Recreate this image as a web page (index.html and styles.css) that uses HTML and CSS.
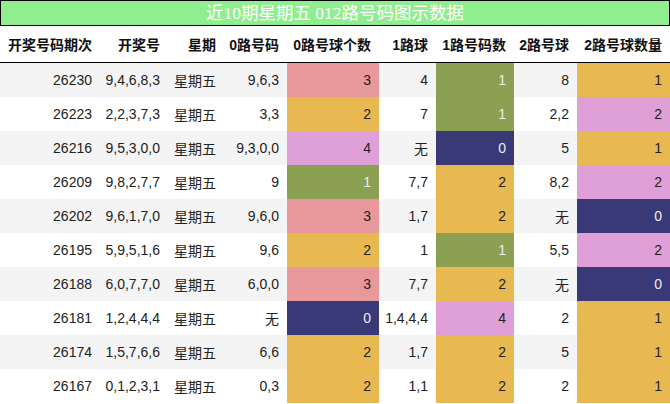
FILE: index.html
```html
<!DOCTYPE html>
<html>
<head>
<meta charset="utf-8">
<link rel="stylesheet" href="styles.css">
</head>
<body>
<div class="title">近10期星期五 012路号码图示数据</div>
<table class="data">
<colgroup>
<col class="w1"><col class="w2"><col class="w3"><col class="w4"><col class="w5"><col class="w6"><col class="w7"><col class="w8"><col class="w9">
</colgroup>
<thead>
<tr><th>开奖号码期次</th><th>开奖号</th><th>星期</th><th>0路号码</th><th>0路号球个数</th><th>1路球</th><th>1路号码数</th><th>2路号球</th><th>2路号球数量</th></tr>
</thead>
<tbody>
<tr><td>26230</td><td>9,4,6,8,3</td><td>星期五</td><td>9,6,3</td><td class="pink">3</td><td>4</td><td class="olive">1</td><td>8</td><td class="gold">1</td></tr>
<tr><td>26223</td><td>2,2,3,7,3</td><td>星期五</td><td>3,3</td><td class="gold">2</td><td>7</td><td class="olive">1</td><td>2,2</td><td class="lav">2</td></tr>
<tr><td>26216</td><td>9,5,3,0,0</td><td>星期五</td><td>9,3,0,0</td><td class="lav">4</td><td>无</td><td class="navy">0</td><td>5</td><td class="gold">1</td></tr>
<tr><td>26209</td><td>9,8,2,7,7</td><td>星期五</td><td>9</td><td class="olive">1</td><td>7,7</td><td class="gold">2</td><td>8,2</td><td class="lav">2</td></tr>
<tr><td>26202</td><td>9,6,1,7,0</td><td>星期五</td><td>9,6,0</td><td class="pink">3</td><td>1,7</td><td class="gold">2</td><td>无</td><td class="navy">0</td></tr>
<tr><td>26195</td><td>5,9,5,1,6</td><td>星期五</td><td>9,6</td><td class="gold">2</td><td>1</td><td class="olive">1</td><td>5,5</td><td class="lav">2</td></tr>
<tr><td>26188</td><td>6,0,7,7,0</td><td>星期五</td><td>6,0,0</td><td class="pink">3</td><td>7,7</td><td class="gold">2</td><td>无</td><td class="navy">0</td></tr>
<tr><td>26181</td><td>1,2,4,4,4</td><td>星期五</td><td>无</td><td class="navy">0</td><td>1,4,4,4</td><td class="lav">4</td><td>2</td><td class="gold">1</td></tr>
<tr><td>26174</td><td>1,5,7,6,6</td><td>星期五</td><td>6,6</td><td class="gold">2</td><td>1,7</td><td class="gold">2</td><td>5</td><td class="gold">1</td></tr>
<tr><td>26167</td><td>0,1,2,3,1</td><td>星期五</td><td>0,3</td><td class="gold">2</td><td>1,1</td><td class="gold">2</td><td>2</td><td class="gold">1</td></tr>
</tbody>
</table>
</body>
</html>
```
FILE: styles.css
```css
html, body {
  margin: 0;
  padding: 0;
  background: #fff;
}
body {
  width: 670px;
  font-family: "Liberation Sans", "Noto Sans CJK SC", sans-serif;
  color: #222;
}
.title {
  box-sizing: border-box;
  height: 26px;
  border: 1px solid #000;
  background: #90ee90;
  color: #fff;
  font-family: "Liberation Serif", "Noto Sans CJK SC", serif;
  font-size: 17.5px;
  line-height: 24px;
  text-align: center;
}
.data {
  width: 670px;
  table-layout: fixed;
  border-collapse: collapse;
  font-size: 14px;
}
.w1 { width: 100px; }
.w2 { width: 68px; }
.w3 { width: 56px; }
.w4 { width: 63px; }
.w5 { width: 92px; }
.w6 { width: 57px; }
.w7 { width: 78px; }
.w8 { width: 63px; }
.w9 { width: 93px; }
.data th {
  height: 36px;
  padding: 0 8px 0 0;
  text-align: right;
  font-weight: bold;
  border-bottom: 1px solid #000;
  white-space: nowrap;
  color: #111;
}
.data th:first-child {
  padding-left: 8px;
}
.data td {
  height: 34px;
  padding: 0 8px 0 0;
  text-align: right;
  white-space: nowrap;
}
.data tbody tr:nth-child(odd) {
  background: #f4f4f4;
}
.data td.pink { background: #e8979b; }
.data td.gold { background: #e8b951; }
.data td.olive { background: #8ba052; color: #eee; }
.data td.navy { background: #393977; color: #eee; }
.data td.lav { background: #dfa0d7; }
```
